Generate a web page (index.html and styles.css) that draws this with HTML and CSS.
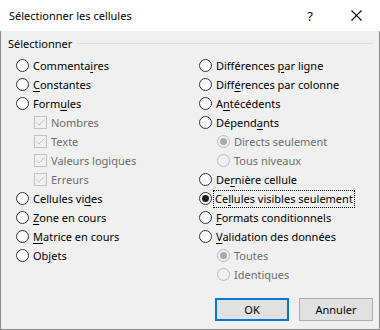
FILE: index.html
```html
<!DOCTYPE html>
<html lang="fr">
<head>
<meta charset="utf-8">
<title>Sélectionner les cellules</title>
<link rel="stylesheet" href="styles.css">
</head>
<body>
<div class="window">
  <div class="titlebar">
    <span class="title">Sélectionner les cellules</span>
    <span class="help">?</span>
    <span class="close"><svg width="11" height="11" viewBox="0 0 11 11"><path d="M0.5 0.5 L10.5 10.5 M10.5 0.5 L0.5 10.5" stroke="#000" stroke-width="1.1" fill="none"/></svg></span>
  </div>
  <div class="content">
    <div class="group-head"><span class="legend">Sélectionner</span><span class="rule"></span></div>
    <div class="grid">
      <div class="col">
        <div class="row"><span class="radio"></span><span>Commenta<u>i</u>res</span></div>
        <div class="row"><span class="radio"></span><span><u>C</u>onstantes</span></div>
        <div class="row"><span class="radio"></span><span>Form<u>u</u>les</span></div>
        <div class="row sub dis"><span class="check"><svg width="11" height="11" viewBox="0 0 11 11"><path d="M1.5 5.5 L4 8 L9.5 2.5" stroke="#c3c3c3" stroke-width="1" fill="none"/></svg></span><span>Nombres</span></div>
        <div class="row sub dis"><span class="check"><svg width="11" height="11" viewBox="0 0 11 11"><path d="M1.5 5.5 L4 8 L9.5 2.5" stroke="#c3c3c3" stroke-width="1" fill="none"/></svg></span><span>Texte</span></div>
        <div class="row sub dis"><span class="check"><svg width="11" height="11" viewBox="0 0 11 11"><path d="M1.5 5.5 L4 8 L9.5 2.5" stroke="#c3c3c3" stroke-width="1" fill="none"/></svg></span><span>Valeurs logiques</span></div>
        <div class="row sub dis"><span class="check"><svg width="11" height="11" viewBox="0 0 11 11"><path d="M1.5 5.5 L4 8 L9.5 2.5" stroke="#c3c3c3" stroke-width="1" fill="none"/></svg></span><span>Erreurs</span></div>
        <div class="row"><span class="radio"></span><span>Cellules vi<u>d</u>es</span></div>
        <div class="row"><span class="radio"></span><span><u>Z</u>one en cours</span></div>
        <div class="row"><span class="radio"></span><span><u>M</u>atrice en cours</span></div>
        <div class="row"><span class="radio"></span><span>Ob<u>j</u>ets</span></div>
      </div>
      <div class="col">
        <div class="row"><span class="radio"></span><span>Différences <u>p</u>ar ligne</span></div>
        <div class="row"><span class="radio"></span><span>Diff<u>é</u>rences par colonne</span></div>
        <div class="row"><span class="radio"></span><span>A<u>n</u>técédents</span></div>
        <div class="row"><span class="radio"></span><span>Dépend<u>a</u>nts</span></div>
        <div class="row sub dis"><span class="radio on"></span><span>Directs seulement</span></div>
        <div class="row sub dis"><span class="radio"></span><span>Tous niveaux</span></div>
        <div class="row"><span class="radio"></span><span>De<u>r</u>nière cellule</span></div>
        <div class="row"><span class="radio on"></span><span class="focus">Ce<u>l</u>lules visibles seulement</span></div>
        <div class="row"><span class="radio"></span><span><u>F</u>ormats conditionnels</span></div>
        <div class="row"><span class="radio"></span><span><u>V</u>alidation des données</span></div>
        <div class="row sub dis"><span class="radio on"></span><span>Toutes</span></div>
        <div class="row sub dis"><span class="radio"></span><span>Identiques</span></div>
      </div>
    </div>
    <div class="buttons">
      <button class="btn default">OK</button>
      <button class="btn">Annuler</button>
    </div>
  </div>
</div>
</body>
</html>
```
FILE: styles.css
```css
* { box-sizing: border-box; }
html, body { margin: 0; padding: 0; }
body {
  font-family: "Noto Sans", "Open Sans", sans-serif;
  font-size: 11px;
  color: #000;
  background: #fff;
}
.window {
  width: 380px;
  height: 330px;
  display: flex;
  flex-direction: column;
}
.titlebar {
  height: 31px;
  background: #fff;
  display: flex;
  align-items: center;
  padding-left: 9px;
}
.title {
  flex: 1;
  font-size: 11px;
}
.help {
  font-size: 13px;
  width: 14px;
  margin-right: 34px;
  text-align: center;
}
.close {
  display: flex;
  margin-right: 18px;
}
.content {
  flex: 1;
  background: #f0f0f0;
  border: 1px solid #8c8c8c;
  border-top: none;
  display: flex;
  flex-direction: column;
  padding: 0 6px 8px 6px;
}
.group-head {
  height: 25px;
  display: flex;
  align-items: center;
  padding-left: 1px;
  padding-bottom: 1px;
}
.legend { margin-right: 6px; }
.rule {
  flex: 1;
  height: 1px;
  background: #dcdcdc;
}
.grid {
  display: grid;
  grid-template-columns: 183px 1fr;
  padding-left: 9px;
}
.row {
  height: 19px;
  display: flex;
  align-items: center;
  white-space: nowrap;
}
.row u { text-decoration: underline; text-underline-offset: 2px; }
.sub { padding-left: 18px; }
.dis { color: #6d6d6d; }
.radio {
  width: 13px;
  height: 13px;
  border: 1px solid #333;
  border-radius: 50%;
  background: #fff;
  margin-right: 4px;
  flex: none;
  display: flex;
  align-items: center;
  justify-content: center;
}
.radio.on::after {
  content: "";
  width: 7px;
  height: 7px;
  border-radius: 50%;
  background: #1a1a1a;
}
.dis .radio {
  border-color: #bcbcbc;
  background: #f0f0f0;
}
.dis .radio.on::after { background: #a8a8a8; }
.check {
  width: 13px;
  height: 13px;
  border: 1px solid #c3c3c3;
  background: #f0f0f0;
  margin-right: 4px;
  flex: none;
  display: flex;
}
.focus {
  outline: 1px dotted #000;
  outline-offset: 0;
  padding: 0 1px;
  margin-left: -2px;
  line-height: 16px;
}
.buttons {
  margin-top: auto;
  display: flex;
  justify-content: flex-end;
  gap: 10px;
}
.btn {
  width: 74px;
  height: 23px;
  background: #e1e1e1;
  border: 1px solid #adadad;
  font-family: inherit;
  font-size: 11px;
  color: #000;
  padding: 0;
}
.btn.default { border: 2px solid #0078d7; }
```
